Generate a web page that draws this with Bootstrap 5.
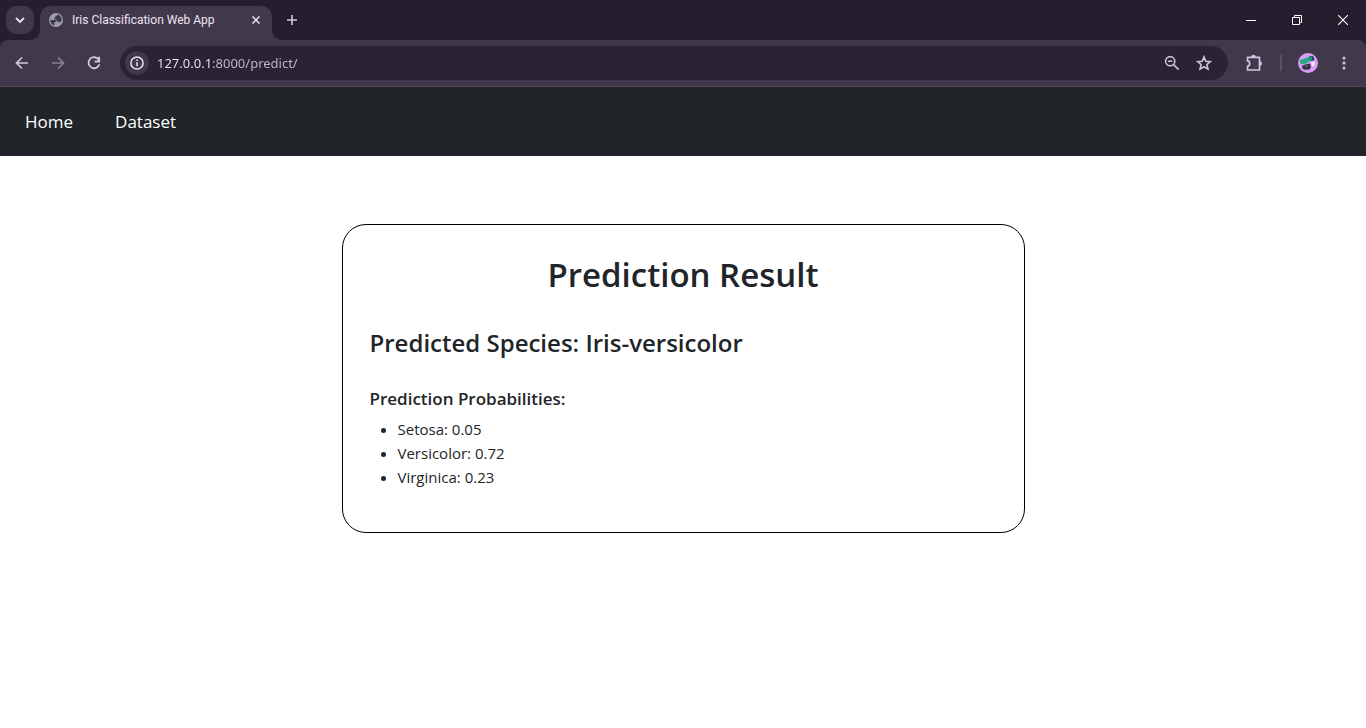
<!DOCTYPE html>
<html lang="en">
<head>
<meta charset="utf-8">
<meta name="viewport" content="width=device-width, initial-scale=1">
<title>Iris Classification Web App</title>
<link href="https://cdn.jsdelivr.net/npm/bootstrap@5.3.0/dist/css/bootstrap.min.css" rel="stylesheet">
<style>
  body { font-family: "Open Sans", "Noto Sans", sans-serif; }
  button, input { font-family: inherit; }
  svg { display: block; flex: none; }

  .browser-chrome { background: #241e2e; }
  .tab-strip { height: 40px; }
  .chrome-btn { border: 0; padding: 0; background: transparent; color: #d1c6e0; display: flex; align-items: center; justify-content: center; flex: none; }
  .tab-list-btn { width: 28px; height: 28px; border-radius: 10px; background: #41384c; color: #e8e3ee; margin: 6px 6px 0; }
  .browser-tab { width: 232px; height: 34px; margin-top: 6px; padding: 0 8px 6px; background: #41384c; border-radius: 10px 10px 0 0; position: relative; color: #ece6f2; font-family: Roboto, sans-serif; font-size: 12px; line-height: 16px; }
  .browser-tab::before, .browser-tab::after { content: ""; position: absolute; bottom: 0; width: 10px; height: 10px; }
  .browser-tab::before { left: -10px; background: radial-gradient(circle at 0 0, transparent 10px, #41384c 10px); }
  .browser-tab::after { right: -10px; background: radial-gradient(circle at 100% 0, transparent 10px, #41384c 10px); }
  .icon-btn { width: 36px; height: 34px; }
  .tab-close { width: 16px; height: 16px; color: #ece6f2; }
  .new-tab { width: 28px; height: 28px; margin: 6px 0 0 6px; }
  .window-btn { width: 46px; height: 40px; color: #fff; }

  .tool-bar { height: 47px; padding: 0 4px; background: #41384c; border-bottom: 1px solid #50494f; border-radius: 8px 8px 0 0; }
  .address-bar { height: 34px; margin-left: 8px; padding: 0 8px 0 5px; border-radius: 17px; background: #2a2334; }
  .site-info { width: 24px; height: 24px; border-radius: 50%; background: #41384c; color: #e8e3ee; }
  .address-field { width: 100%; height: 34px; padding: 0; border: 0; outline: 0; font-family: "Noto Sans", sans-serif; font-size: 13px;
    color: transparent; background: linear-gradient(90deg, #f0ebf5 53px, #c3bccb 53px); -webkit-background-clip: text; background-clip: text; }
  .address-icon { width: 32px; height: 32px; color: #cbc5d0; }
  .tool-divider { width: 2px; height: 16px; background: #5b5267; margin: 0 8px; }

  .site-nav { min-height: 69px; padding: 0 4px; background: #212529; }
  .site-nav .navbar-nav .nav-link { font-size: 17px; line-height: 28px; color: #fff; padding: 20px 21px; }

  .result-box { margin-top: 68px; padding: 27px; border: 1px solid #000; border-radius: 24px; }
  .result-box h1 { font-size: 33px; line-height: 46px; margin: 0 0 27px; font-weight: 600; }
  .result-box h2 { font-size: 24px; line-height: 36px; margin: 0 0 26px; font-weight: 600; }
  .result-box h3 { font-size: 17px; line-height: 24px; margin: 0 0 6px; font-weight: 600; }
  .result-box ul { font-size: 15px; line-height: 24px; margin: 0 0 16px; padding-left: 28px; }
</style>
</head>
<body class="bg-white">

<header class="browser-chrome">
  <div class="tab-strip d-flex">
    <button class="chrome-btn tab-list-btn" type="button" aria-label="Search tabs">
      <svg width="10" height="8" viewBox="0 0 10 8" fill="none" stroke="currentColor" stroke-width="1.8"><path d="M1 2l4 4 4-4"/></svg>
    </button>
    <div class="browser-tab d-flex align-items-center">
      <svg width="16" height="16" viewBox="0 0 16 16"><circle cx="8" cy="8" r="7" fill="#9aa0a6"/><path d="M2.300 8.100h4.200c1.500 0 2 .9 2 2h-2v3.300C4 13 2.200 11 2.300 8.100zM9.300 2.500c0 1.300-.7 1.700-2.100 1.700v1.700h-1v1.500h2.200c0 1.300.7 1.800 2 1.800v1.300c1.800 0 2.300-1.300 3.300-2.100C13.900 5.300 12 3 9.300 2.500z" fill="#41384c"/></svg>
      <span class="ms-2 flex-grow-1 text-nowrap">Iris Classification Web App</span>
      <button class="chrome-btn tab-close" type="button" aria-label="Close tab">
        <svg width="8" height="8" viewBox="0 0 8 8" fill="none" stroke="currentColor" stroke-width="1.500"><path d="M.5.5l7 7m0-7l-7 7"/></svg>
      </button>
    </div>
    <button class="chrome-btn new-tab" type="button" aria-label="New tab">
      <svg width="10" height="10" viewBox="0 0 10 10" fill="none" stroke="currentColor" stroke-width="1.600"><path d="M5 0v10M0 5h10"/></svg>
    </button>
    <div class="d-flex ms-auto">
      <button class="chrome-btn window-btn" type="button" aria-label="Minimize">
        <svg width="10" height="10" viewBox="0 0 10 10"><path d="M0 5h10v1H0z" fill="currentColor"/></svg>
      </button>
      <button class="chrome-btn window-btn" type="button" aria-label="Restore">
        <svg width="10" height="10" viewBox="0 0 10 10" fill="none" stroke="currentColor"><path d="M.5 2.500h7v7h-7zM2.500 2.500v-2h7v7h-2"/></svg>
      </button>
      <button class="chrome-btn window-btn" type="button" aria-label="Close">
        <svg width="10" height="10" viewBox="0 0 10 10" fill="none" stroke="currentColor" stroke-width="1.100"><path d="M0 0l10 10M10 0L0 10"/></svg>
      </button>
    </div>
  </div>

  <div class="tool-bar d-flex align-items-center">
    <button class="chrome-btn icon-btn" type="button" aria-label="Back">
      <svg width="14" height="14" viewBox="0 0 14 14" fill="none" stroke="currentColor" stroke-width="1.700"><path d="M13 7H2M7 1.500L1.500 7 7 12.500"/></svg>
    </button>
    <button class="chrome-btn icon-btn opacity-50" type="button" aria-label="Forward">
      <svg width="14" height="14" viewBox="0 0 14 14" fill="none" stroke="currentColor" stroke-width="1.700"><path d="M1 7h11M7 1.500L12.500 7 7 12.500"/></svg>
    </button>
    <button class="chrome-btn icon-btn" type="button" aria-label="Reload">
      <svg width="14" height="14" viewBox="0 0 14 14" fill="none" stroke="currentColor" stroke-width="1.800"><path d="M11.700 3.700A5.500 5.500 0 1 0 12.400 8.200M12.200.8v4.700H7.600"/></svg>
    </button>
    <div class="address-bar d-flex align-items-center flex-grow-1">
      <button class="chrome-btn site-info" type="button" aria-label="Site information">
        <svg width="14" height="14" viewBox="0 0 14 14" fill="none" stroke="currentColor" stroke-width="1.500"><circle cx="7" cy="7" r="6.100"/><path d="M7 6.200v4M7 3.500v1.500"/></svg>
      </button>
      <input class="address-field flex-grow-1 ms-2" type="text" aria-label="Address" value="127.0.0.1:8000/predict/">
      <button class="chrome-btn address-icon" type="button" aria-label="Zoom">
        <svg width="16" height="16" viewBox="0 0 16 16" fill="none" stroke="currentColor" stroke-width="1.600"><circle cx="6.200" cy="6.200" r="4.600"/><path d="M9.600 9.600l5 5M4 6.200h4.400"/></svg>
      </button>
      <button class="chrome-btn address-icon" type="button" aria-label="Bookmark">
        <svg width="16" height="16" viewBox="0 0 16 16" fill="none" stroke="currentColor" stroke-width="1.600"><path d="M8 1.900l1.800 4.300 4.600.4-3.500 3 1.100 4.600L8 11.800l-4 2.400 1.100-4.600-3.500-3 4.600-.4z"/></svg>
      </button>
    </div>
    <button class="chrome-btn icon-btn ms-2" type="button" aria-label="Extensions">
      <svg width="18" height="18" viewBox="0 0 18 18"><path d="M2.500 3.300h12v12.700h-12v-3.700c2.900-.4 2.900-5 0-5.400z" fill="none" stroke="currentColor" stroke-width="1.700" stroke-linejoin="round"/><path d="M6.300 3a2.200 2.200 0 0 1 4.400 0zM14.800 7.300a2.200 2.200 0 0 1 0 4.400z" fill="currentColor"/></svg>
    </button>
    <span class="tool-divider"></span>
    <button class="chrome-btn icon-btn" type="button" aria-label="Profile">
      <svg width="20" height="20" viewBox="0 0 20 20"><circle cx="10" cy="10" r="10" fill="#d99bf5"/><path d="M1.500 7L6 6l5-2.500 4 0 1 4-5 1-3 2-5 .800z" fill="#1dad7c"/><path d="M11.500 3.500l3.500-.5 1.500 4-3 .500z" fill="#24315e"/><path d="M12.500 4l1.500-.3.500 2.500-1.500.3z" fill="#1dad7c"/><path d="M4 13l3-1.500 5-1 1 3.500-1.500 2.500-5.500.300-1.500-1.500z" fill="#35323f"/><path d="M13 9l3.500-.500.500 3-3 2.500z" fill="#f2e9fa"/><path d="M7 12.500l3-.5-2 2z" fill="#77717f"/></svg>
    </button>
    <button class="chrome-btn icon-btn" type="button" aria-label="Menu">
      <svg width="4" height="14" viewBox="0 0 4 14" fill="currentColor"><circle cx="2" cy="2" r="1.500"/><circle cx="2" cy="7" r="1.500"/><circle cx="2" cy="12" r="1.500"/></svg>
    </button>
  </div>
</header>

<nav class="site-nav navbar navbar-expand">
  <ul class="navbar-nav">
    <li class="nav-item"><a class="nav-link" href="#">Home</a></li>
    <li class="nav-item"><a class="nav-link" href="#">Dataset</a></li>
  </ul>
</nav>

<main>
  <section class="result-box w-50 mx-auto">
    <h1 class="text-center">Prediction Result</h1>
    <h2>Predicted Species: Iris-versicolor</h2>
    <h3>Prediction Probabilities:</h3>
    <ul>
      <li>Setosa: 0.05</li>
      <li>Versicolor: 0.72</li>
      <li>Virginica: 0.23</li>
    </ul>
  </section>
</main>

<script src="https://cdn.jsdelivr.net/npm/bootstrap@5.3.0/dist/js/bootstrap.bundle.min.js"></script>
</body>
</html>
